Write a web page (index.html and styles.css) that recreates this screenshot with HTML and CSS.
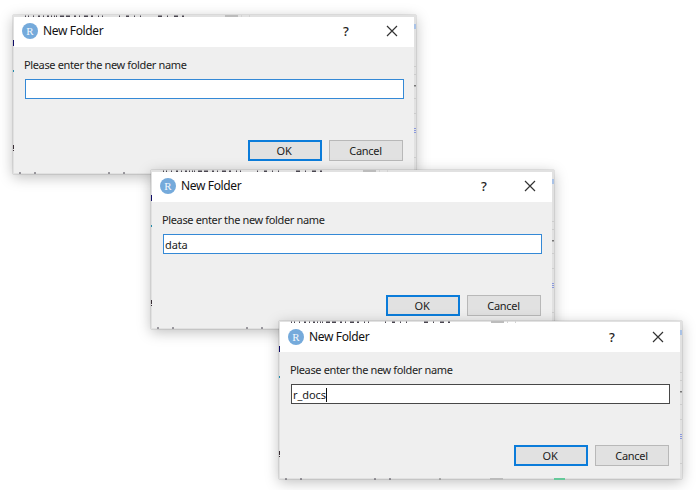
FILE: index.html
```
<!DOCTYPE html>
<html lang="en">
<head>
<meta charset="utf-8">
<title>New Folder</title>
<link rel="stylesheet" href="styles.css">
</head>
<body>
<svg width="0" height="0" class="defs" aria-hidden="true">
  <symbol id="close" viewBox="0 0 12 12"><path d="M1 1 11 11M11 1 1 11" fill="none" stroke="#333" stroke-width="1.2"/></symbol>
  <symbol id="edges" viewBox="0 0 405 160">
    <path d="M12 1.3h1m2 0h1m4 0h1m4 0h2m3 0h1m3 0h2m2 0h1m2 0h1m1 0h1m3 0h4m2 0h4m4 0h2m3 0h1m4 0h4m3 0h2m5 0h1m3 0h1m16 0h1m6 0h3m5 0h1m5 0h1m17 0h4m5 0h1m6 0h4m4 0h2" stroke="#4a4650" stroke-width="1.4" fill="none"/>
    <path d="M212 1h13" stroke="#bcbcbc" stroke-width="2"/>
    <path d="M228 1h1m7 0h1" stroke="#d2d2d2" stroke-width="2"/>
    <path d="M.5 25v6" stroke="#100d68" stroke-width="1"/>
    <path d="M.5 55v2" stroke="#238cac" stroke-width="1"/>
    <path d="M.5 130v4m0 1v1" stroke="#392e35" stroke-width="1"/>
    <path d="M6 158h2m13 0h2m72 0h2m13 0h2" stroke="#4a4652" stroke-width="1.2"/>
    <path d="M402 9v5" stroke="#a9c2e6" stroke-width="2"/>
    <path d="M402 51v1m0 7v1m0 23v1m0 14v1m0 14v1m0 28v1" stroke="#ccc" stroke-width="2"/>
    <path d="M402 70v1.5" stroke="#555" stroke-width="1.5"/>
    <path d="M402 113v1m0 1v1m0 1v1" stroke="#8a98dd" stroke-width="2"/>
  </symbol>
</svg>
<main class="desktop">
  <section class="dialog first">
    <svg class="edges" aria-hidden="true"><use href="#edges"/></svg>
    <header><span class="logo">R</span><h1>New Folder</h1><span class="help">?</span><svg class="close"><use href="#close"/></svg></header>
    <div class="content">
      <p>Please enter the new folder name</p>
      <div class="field"></div>
      <div class="actions"><button class="ok">OK</button><button>Cancel</button></div>
    </div>
  </section>
  <section class="dialog second">
    <svg class="edges" aria-hidden="true"><use href="#edges"/></svg>
    <header><span class="logo">R</span><h1>New Folder</h1><span class="help">?</span><svg class="close"><use href="#close"/></svg></header>
    <div class="content">
      <p>Please enter the new folder name</p>
      <div class="field">data</div>
      <div class="actions"><button class="ok">OK</button><button>Cancel</button></div>
    </div>
  </section>
  <section class="dialog third">
    <svg class="edges" aria-hidden="true"><use href="#edges"/><path d="M160 158h2" stroke="#777" stroke-width="1.2"/><path d="M211 158h13" stroke="#bbb" stroke-width="2"/><path d="M275 158h11" stroke="#65c99a" stroke-width="2"/></svg>
    <header><span class="logo">R</span><h1>New Folder</h1><span class="help">?</span><svg class="close"><use href="#close"/></svg></header>
    <div class="content">
      <p>Please enter the new folder name</p>
      <div class="field">r_docs<i class="caret"></i></div>
      <div class="actions"><button class="ok">OK</button><button>Cancel</button></div>
    </div>
  </section>
</main>
</body>
</html>
```
FILE: styles.css
```
* { box-sizing: border-box; }
body { margin: 0; background: #fff; font-family: "Noto Sans", sans-serif; color: #222; }
.defs { position: absolute; }
.desktop { position: relative; width: 696px; height: 490px; overflow: hidden; }
.dialog {
  position: absolute;
  width: 403px;
  height: 159px;
  padding: 2px 2px 1px 1px;
  background: #e1e1e1;
  box-shadow: 0 0 1px rgba(0,0,0,.45), 0 3px 13px rgba(0,0,0,.26);
}
.first { left: 13px; top: 15px; }
.second { left: 151px; top: 170px; }
.third { left: 279px; top: 321px; height: 158px; padding-top: 1px; }
.edges { position: absolute; left: 0; top: 0; width: 405px; height: 160px; pointer-events: none; }
header { display: flex; align-items: center; height: 30px; padding: 0 16px 2px 8px; background: #fff; }
.third header { padding-bottom: 0; }
.logo {
  display: flex; align-items: center; justify-content: center;
  width: 16px; height: 16px; border-radius: 50%;
  background: #75aadb; color: #f2f8fd;
  font: 11px/16px "Liberation Serif", serif;
}
h1 { margin: 0 auto 0 5px; font-size: 12px; line-height: 16px; font-weight: 400; letter-spacing: -.35px; color: #111; white-space: nowrap; }
.help { width: 8px; margin-right: 36px; font-size: 13px; line-height: 16px; font-weight: 500; text-align: center; }
.close { width: 12px; height: 12px; }
.content { height: 126px; padding: 10px 10px 0 11px; background: #efefef; }
p { margin: 0 0 6px -1px; font-size: 11px; line-height: 16px; letter-spacing: -.36px; white-space: nowrap; }
.field {
  display: flex; align-items: center;
  height: 20px; padding: 1px 0 0 1px;
  border: 1px solid #3489d6; background: #fff;
  font-size: 11px; line-height: 16px; letter-spacing: -.1px;
}
.third .field { border-color: #484848; }
.caret { width: 1px; height: 14px; background: #111; }
.actions { display: flex; justify-content: flex-end; gap: 7px; padding: 41px 1px 0 0; }
button { width: 74px; height: 21px; padding: 0 1px 0 0; border: 1px solid #b8b8b8; background: #e1e1e1; color: #222; font: 11px/17px "Noto Sans", sans-serif; letter-spacing: -.3px; }
.ok { border: 2px solid #0b7cda; padding-right: 2px; }
```
